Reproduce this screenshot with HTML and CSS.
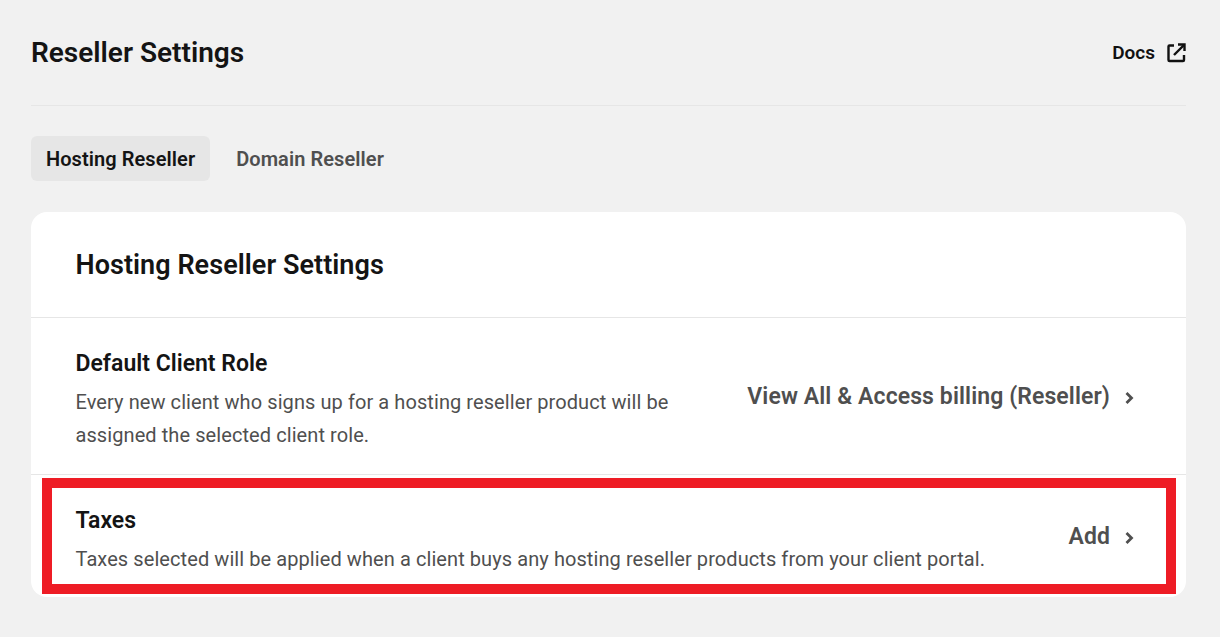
FILE: index.html
```html
<!DOCTYPE html>
<html>
	<head>
		<meta charset="utf-8">
		<title>Reseller Settings</title>
		<link rel="stylesheet" href="styles.css">
	</head>
	<body>
		<div class="page">
			<div class="pageHead">
				<h1>Reseller Settings</h1>
				<a class="docs" href="#">Docs
					<svg width="20" height="20" viewBox="0 0 20 20" fill="none" stroke="#111" stroke-width="2.400">
						<path d="M8 2.500H3.500A1 1 0 0 0 2.500 3.500V17A1 1 0 0 0 3.500 18H17A1 1 0 0 0 18 17V12" />
						<path d="M12 1.500H18.500V8" />
						<path d="M18 2L8 12" />
					</svg>
				</a>
			</div>
			<div class="tabs">
				<a class="tab active" href="#">Hosting Reseller</a>
				<a class="tab" href="#">Domain Reseller</a>
			</div>
			<div class="card">
				<h2>Hosting Reseller Settings</h2>
				<div class="row roleRow">
					<div class="info">
						<h3>Default Client Role</h3>
						<p>Every new client who signs up for a hosting reseller product will be assigned the selected client role.</p>
					</div>
					<a class="action" href="#">View All &amp; Access billing (Reseller)
						<svg width="10" height="14" viewBox="0 0 10 14" fill="none" stroke="#4f4f4f" stroke-width="2.800">
							<path d="M2.500 2L7.500 7L2.500 12" />
						</svg>
					</a>
				</div>
				<div class="row taxRow">
					<div class="info">
						<h3>Taxes</h3>
						<p>Taxes selected will be applied when a client buys any hosting reseller products from your client portal.</p>
					</div>
					<a class="action" href="#">Add
						<svg width="10" height="14" viewBox="0 0 10 14" fill="none" stroke="#4f4f4f" stroke-width="2.800">
							<path d="M2.500 2L7.500 7L2.500 12" />
						</svg>
					</a>
					<div class="highlight"></div>
				</div>
			</div>
		</div>
	</body>
</html>
```

FILE: styles.css
```css
* {
	margin: 0;
	padding: 0;
	box-sizing: border-box;
}

html,
body {
	width: 100%;
	height: 100%;
}

body {
	background: #f1f1f1;
	font-family: Roboto, "Liberation Sans", sans-serif;
	color: #141414;
	overflow: hidden;
}

a {
	text-decoration: none;
}

.page {
	padding: 0 34px 0 31px;
}

.pageHead {
	height: 106px;
	border-bottom: 1px solid #e6e6e6;
	display: flex;
	justify-content: space-between;
	align-items: center;
}

h1 {
	font-size: 28px;
	font-weight: 600;
}

.docs {
	display: flex;
	align-items: center;
	gap: 11px;
	font-size: 19px;
	font-weight: 600;
	color: #111;
}

.tabs {
	display: flex;
	gap: 11px;
	margin-top: 30px;
}

.tab {
	height: 45px;
	padding: 0 15px;
	border-radius: 6px;
	display: flex;
	align-items: center;
	font-size: 20px;
	font-weight: 600;
	letter-spacing: 0.07px;
	color: #4f4f4f;
}

.tab.active {
	background: #e6e6e6;
	color: #141414;
}

.card {
	margin-top: 31px;
	background: #fff;
	border-radius: 16px;
}

h2 {
	height: 106px;
	padding-left: 44.500px;
	display: flex;
	align-items: center;
	font-size: 27px;
	font-weight: 600;
	letter-spacing: 0.05px;
	border-bottom: 1px solid #e6e6e6;
}

.row {
	position: relative;
	display: flex;
	justify-content: space-between;
	align-items: center;
	padding: 0 52px 0 44.500px;
}

.roleRow {
	height: 157px;
	border-bottom: 1px solid #e6e6e6;
}

.taxRow {
	height: 122px;
}

.info {
	padding-top: 9px;
}

h3 {
	font-size: 23px;
	font-weight: 600;
	line-height: 30px;
	margin-bottom: 7px;
}

.info p {
	font-size: 20px;
	line-height: 33px;
	letter-spacing: 0.08px;
	color: #4f4f4f;
}

.roleRow .info {
	width: 620px;
}

.action {
	display: flex;
	align-items: center;
	gap: 14px;
	font-size: 23px;
	font-weight: 600;
	letter-spacing: 0.1px;
	color: #4f4f4f;
}

.action svg {
	margin-top: 4px;
}

.highlight {
	position: absolute;
	left: 11px;
	right: 10px;
	top: 3px;
	height: 116px;
	border: 10px solid #ee1c25;
}
```
